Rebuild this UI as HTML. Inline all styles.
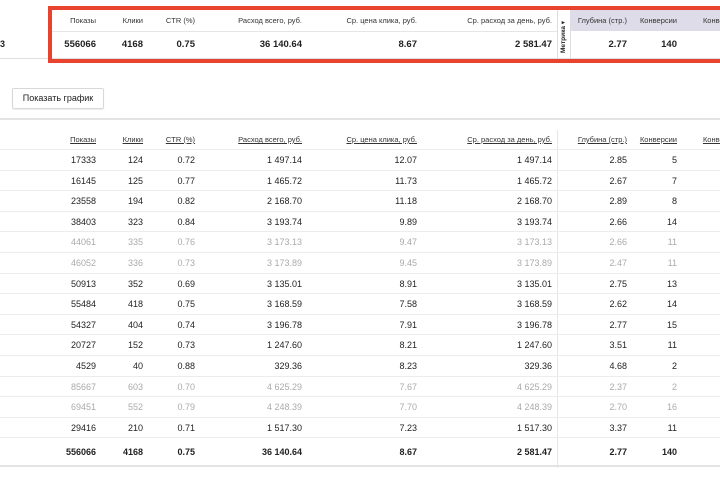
<!DOCTYPE html>
<html><head><meta charset="utf-8"><style>
*{margin:0;padding:0;box-sizing:border-box}
body{width:720px;height:480px;background:#fff;font-family:"Liberation Sans","DejaVu Sans",sans-serif;color:#222;position:relative;overflow:hidden}
.r{position:absolute;left:0;width:720px;height:20.6px;border-bottom:1px solid #ececec;font-size:9px}
.r span{position:absolute;top:5px;text-align:right;white-space:nowrap}
.c1{right:624px}.c2{right:577px}.c3{right:525px}.c4{right:418px}.c5{right:303px}.c6{right:168px}.c7{right:93px}.c8{right:43px}
.g{color:#aaa}
.b{font-weight:bold}
.h span{text-decoration:underline;font-size:7.5px;color:#333}
.abs{position:absolute}
</style></head><body>
<div class="abs" style="left:0;top:58px;width:720px;height:1px;background:#ddd"></div>
<div class="abs" style="left:0;top:39px;font-size:9px;font-weight:bold">3</div>
<div class="abs" style="left:571px;top:10px;width:149px;height:21px;background:#dedce8"></div>
<div class="abs" style="left:557px;top:10px;width:14px;height:48px;border-left:1px solid #ddd;border-right:1px solid #ddd"></div>
<div class="abs" style="left:559px;top:53px;transform:rotate(-90deg);transform-origin:0 0;font-size:6.5px;font-weight:bold;white-space:nowrap">Метрика ▾</div>
<div class="abs" style="left:52px;top:31px;width:505px;height:1px;background:#e6e6e6"></div>
<div class="r" style="top:10px;height:21px;border:none;font-size:7.5px;color:#333">
<span class="c1" style="top:6px">Показы</span><span class="c2" style="top:6px">Клики</span><span class="c3" style="top:6px">CTR (%)</span><span class="c4" style="top:6px">Расход всего, руб.</span><span class="c5" style="top:6px">Ср. цена клика, руб.</span><span class="c6" style="top:6px">Ср. расход за день, руб.</span><span class="c7" style="top:6px">Глубина (стр.)</span><span class="c8" style="top:6px">Конверсии</span><span style="right:-20px;top:6px">Конверсии</span></div>
<div class="r b" style="top:32px;height:26px;border:none;font-size:9.5px">
<span class="c1" style="top:7px">556066</span><span class="c2" style="top:7px">4168</span><span class="c3" style="top:7px">0.75</span><span class="c4" style="top:7px">36 140.64</span><span class="c5" style="top:7px">8.67</span><span class="c6" style="top:7px">2 581.47</span><span class="c7" style="top:7px">2.77</span><span class="c8" style="top:7px">140</span></div>
<div class="abs" style="left:48px;top:6px;width:690px;height:57px;border:4px solid #e8432f"></div>
<div class="abs" style="left:12px;top:88px;width:92px;height:21px;border:1px solid #d8d8d8;border-radius:2px;font-size:9px;line-height:19px;text-align:center;box-shadow:0 1px 1px rgba(0,0,0,.08)">Показать график</div>
<div class="abs" style="left:0;top:118px;width:720px;height:2px;background:#e4e4e4"></div>
<div class="abs" style="left:557px;top:130px;width:1px;height:338px;background:#e6e6e6"></div>
<div class="r h" style="top:130px;height:20px">
<span class="c1">Показы</span><span class="c2">Клики</span><span class="c3">CTR (%)</span><span class="c4">Расход всего, руб.</span><span class="c5">Ср. цена клика, руб.</span><span class="c6">Ср. расход за день, руб.</span><span class="c7">Глубина (стр.)</span><span class="c8">Конверсии</span><span style="right:-20px">Конверсии</span></div>
<div class="r" style="top:150px"><span class="c1">17333</span><span class="c2">124</span><span class="c3">0.72</span><span class="c4">1 497.14</span><span class="c5">12.07</span><span class="c6">1 497.14</span><span class="c7">2.85</span><span class="c8">5</span></div>
<div class="r" style="top:170.6px"><span class="c1">16145</span><span class="c2">125</span><span class="c3">0.77</span><span class="c4">1 465.72</span><span class="c5">11.73</span><span class="c6">1 465.72</span><span class="c7">2.67</span><span class="c8">7</span></div>
<div class="r" style="top:191.2px"><span class="c1">23558</span><span class="c2">194</span><span class="c3">0.82</span><span class="c4">2 168.70</span><span class="c5">11.18</span><span class="c6">2 168.70</span><span class="c7">2.89</span><span class="c8">8</span></div>
<div class="r" style="top:211.8px"><span class="c1">38403</span><span class="c2">323</span><span class="c3">0.84</span><span class="c4">3 193.74</span><span class="c5">9.89</span><span class="c6">3 193.74</span><span class="c7">2.66</span><span class="c8">14</span></div>
<div class="r g" style="top:232.4px"><span class="c1">44061</span><span class="c2">335</span><span class="c3">0.76</span><span class="c4">3 173.13</span><span class="c5">9.47</span><span class="c6">3 173.13</span><span class="c7">2.66</span><span class="c8">11</span></div>
<div class="r g" style="top:253px"><span class="c1">46052</span><span class="c2">336</span><span class="c3">0.73</span><span class="c4">3 173.89</span><span class="c5">9.45</span><span class="c6">3 173.89</span><span class="c7">2.47</span><span class="c8">11</span></div>
<div class="r" style="top:273.6px"><span class="c1">50913</span><span class="c2">352</span><span class="c3">0.69</span><span class="c4">3 135.01</span><span class="c5">8.91</span><span class="c6">3 135.01</span><span class="c7">2.75</span><span class="c8">13</span></div>
<div class="r" style="top:294.2px"><span class="c1">55484</span><span class="c2">418</span><span class="c3">0.75</span><span class="c4">3 168.59</span><span class="c5">7.58</span><span class="c6">3 168.59</span><span class="c7">2.62</span><span class="c8">14</span></div>
<div class="r" style="top:314.8px"><span class="c1">54327</span><span class="c2">404</span><span class="c3">0.74</span><span class="c4">3 196.78</span><span class="c5">7.91</span><span class="c6">3 196.78</span><span class="c7">2.77</span><span class="c8">15</span></div>
<div class="r" style="top:335.4px"><span class="c1">20727</span><span class="c2">152</span><span class="c3">0.73</span><span class="c4">1 247.60</span><span class="c5">8.21</span><span class="c6">1 247.60</span><span class="c7">3.51</span><span class="c8">11</span></div>
<div class="r" style="top:356px"><span class="c1">4529</span><span class="c2">40</span><span class="c3">0.88</span><span class="c4">329.36</span><span class="c5">8.23</span><span class="c6">329.36</span><span class="c7">4.68</span><span class="c8">2</span></div>
<div class="r g" style="top:376.6px"><span class="c1">85667</span><span class="c2">603</span><span class="c3">0.70</span><span class="c4">4 625.29</span><span class="c5">7.67</span><span class="c6">4 625.29</span><span class="c7">2.37</span><span class="c8">2</span></div>
<div class="r g" style="top:397.2px"><span class="c1">69451</span><span class="c2">552</span><span class="c3">0.79</span><span class="c4">4 248.39</span><span class="c5">7.70</span><span class="c6">4 248.39</span><span class="c7">2.70</span><span class="c8">16</span></div>
<div class="r" style="top:417.8px"><span class="c1">29416</span><span class="c2">210</span><span class="c3">0.71</span><span class="c4">1 517.30</span><span class="c5">7.23</span><span class="c6">1 517.30</span><span class="c7">3.37</span><span class="c8">11</span></div>
<div class="r b" style="top:438.4px;height:29px;border-bottom:2px solid #e4e4e4"><span class="c1" style="top:9px">556066</span><span class="c2" style="top:9px">4168</span><span class="c3" style="top:9px">0.75</span><span class="c4" style="top:9px">36 140.64</span><span class="c5" style="top:9px">8.67</span><span class="c6" style="top:9px">2 581.47</span><span class="c7" style="top:9px">2.77</span><span class="c8" style="top:9px">140</span></div>
</body></html>
